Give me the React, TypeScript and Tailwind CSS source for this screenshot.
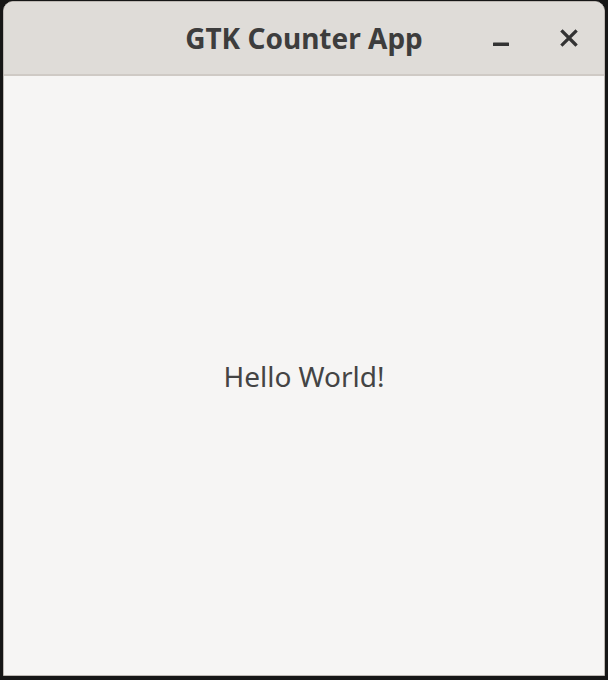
import React from 'react';

const font = { fontFamily: '"Noto Sans", "Open Sans", sans-serif' };

export default function App() {
  return (
    <div className="w-[608px] h-[680px] bg-[#161616] pt-[1px] pl-[3px] pr-[3px] pb-[4px] overflow-hidden" style={font}>
      <div className="flex h-full flex-col overflow-hidden rounded-t-[10px] border border-[#bdb8b3] bg-[#f6f5f4]">
        {/* Header bar */}
        <div className="relative flex h-[74px] shrink-0 items-center justify-center border-b-2 border-[#cfcac5] bg-[#dfdcd8]">
          <span className="text-[28px] font-bold text-[#3d3d3d] leading-none">GTK Counter App</span>
          <div className="absolute right-[20px] top-0 flex h-full items-center gap-[38px]">
            <svg width="30" height="30" viewBox="0 0 30 30">
              <rect x="7" y="19.5" width="16" height="3.5" rx="0.5" fill="#333" />
            </svg>
            <svg width="30" height="30" viewBox="0 0 30 30">
              <path d="M8.5 8.5 L21.5 21.5 M21.5 8.5 L8.5 21.5" stroke="#333" strokeWidth="3.2" strokeLinecap="square" />
            </svg>
          </div>
        </div>
        {/* Content */}
        <div className="flex flex-1 items-center justify-center">
          <span className="text-[28px] text-[#444] leading-none">Hello World!</span>
        </div>
      </div>
    </div>
  );
}
